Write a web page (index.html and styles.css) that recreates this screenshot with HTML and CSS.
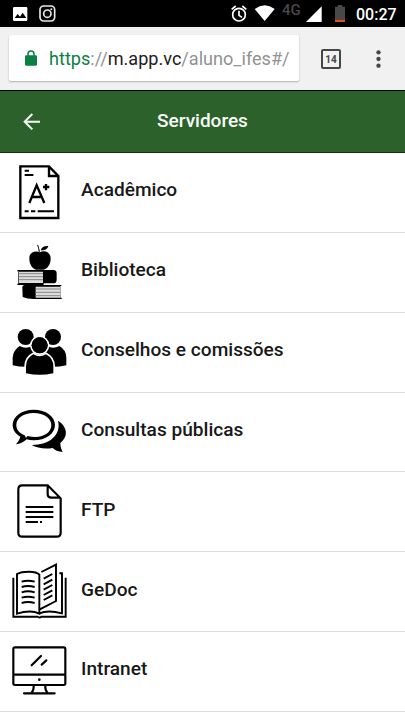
FILE: index.html
```
<!DOCTYPE html>
<html lang="pt-BR">
<head>
<meta charset="utf-8">
<meta name="viewport" content="width=device-width, initial-scale=1">
<title>Servidores</title>
<link rel="stylesheet" href="styles.css">
</head>
<body>
<div class="status">
  <svg class="status-left" viewBox="0 0 180 81">
    <rect x="39" y="21" width="43" height="42" rx="4" fill="#fff"/>
    <path d="M44 54l9-12 7 8 8-12 11 16z" fill="#000"/>
    <g fill="none" stroke="#e8e8e8" stroke-width="5"><rect x="120" y="18" width="44" height="45" rx="11"/><circle cx="142" cy="41" r="11"/></g>
    <circle cx="154" cy="28" r="3" fill="#e8e8e8"/>
  </svg>
  <div class="status-right">
    <svg class="signal" viewBox="72 0 144 81">
      <g fill="none" stroke="#fff" stroke-width="5"><circle cx="102" cy="44" r="19"/><path d="M102 32v14l9 6M80 28l12-10M112 18l12 10"/></g>
      <path d="M149 27q30-22 60 0l-30 36z" fill="#fff"/>
    </svg>
    <span class="network">4G</span>
    <svg class="battery" viewBox="300 0 135 81">
      <path d="M353 19v47h-47z" fill="#fff"/>
      <path d="M393 20h8v-5h14v5h8v39h-30z" fill="#484848"/><path d="M393 59h30v7h-30z" fill="#d9502f"/>
    </svg>
    <span class="clock">00:27</span>
  </div>
</div>
<div class="browser">
  <div class="address">
    <svg class="lock" viewBox="0 0 36 48"><path d="M9 18v-6a9 9 0 0 1 18 0v6" fill="none" stroke="#0b8043" stroke-width="4.5"/><rect y="16" width="36" height="31" rx="4" fill="#0b8043"/></svg>
    <span class="url"><span class="secure">https</span>://<span class="host">m.app.vc</span>/aluno_ifes#/</span>
  </div>
  <span class="tabs">14</span>
  <svg class="more" viewBox="0 0 14 54" fill="#464646"><circle cx="7" cy="7" r="6.5"/><circle cx="7" cy="27" r="6.5"/><circle cx="7" cy="47" r="6.5"/></svg>
</div>
<header class="header">
  <svg class="back" viewBox="0 0 51 51" fill="none" stroke="#f4fff4" stroke-width="6"><path d="M51 26H5M28 3L5 26l23 23"/></svg>
  <h1 class="title">Servidores</h1>
</header>
<main class="list">
  <a class="row">
    <svg class="icon" viewBox="0 0 204 225">
      <g fill="none" stroke="#000" stroke-width="7"><path d="M61 34h86l28 29v126H61zM147 34v29h28"/><path d="M88 144l22-53 23 53M96 126h28M129 96h19M138 87v19"/><path d="M74 47h13M74 60h26M74 169h12M93 169h13M113 169h49" stroke-width="6"/></g>
    </svg><span class="label">Acadêmico</span></a>
  <a class="row">
    <svg class="icon" viewBox="0 0 204 225">
      <path d="M119 52c-13-7-32-1-31 19 0 18 11 32 22 33h20c12-2 22-17 22-33 0-20-18-27-33-19z"/>
      <path d="M122 46c3-10 11-14 23-13-3 10-10 14-23 13z"/><path d="M111 30l4 1 5 19h-4q0-12-5-20z"/>
      <path d="M52 105h108q10 0 10 10v19q0 11-10 11h-29v5H52v-4h3v-37h-3zM184 150v3h-3v35h4v4h-84q-20 0-33-6l-1-27q-1-9 8-9z"/>
      <path d="M57 110h72v34H57zM107 155h73v33h-73z" fill="#ddd"/>
      <path d="M57 116h72M57 125h72M57 134h72M107 162h73M107 172h73M107 182h73" stroke="#858585" stroke-width="3"/>
    </svg><span class="label">Biblioteca</span></a>
  <a class="row">
    <svg class="icon" viewBox="0 0 204 225">
      <g id="member"><circle cx="77" cy="66" r="24"/><path d="M38 151v-23q1-22 21-35 18 10 37 0 21 12 21 35v23q-40 9-79 0z"/></g>
      <use href="#member" x="82"/>
      <g stroke="#fff" stroke-width="10" paint-order="stroke"><circle cx="119" cy="91" r="24"/><path d="M78 175v-21q0-25 22-36 18 12 38 0 22 12 22 36v21q-41 9-82 0z"/></g>
      <circle cx="119" cy="91" r="24"/>
    </svg><span class="label">Conselhos e comissões</span></a>
  <a class="row">
    <svg class="icon" viewBox="0 0 204 225">
      <path d="M174 80c27 17 33 46 7 67 0 12 3 18 7 27-14-1-23-5-30-12-25 4-47 0-63-9 54 1 90-31 79-73z"/>
      <path fill-rule="evenodd" d="M101 47c37 0 64 20 64 46s-28 46-64 46c-8 0-15-1-21-3-10 9-20 14-32 15 6-7 11-15 13-23-15-9-23-21-23-35 0-26 27-46 63-46zm0 10c-31 0-52 16-52 36 0 16 10 24 25 31l4 7 5-5c43 10 71-9 71-33 0-20-22-36-53-36z"/>
    </svg><span class="label">Consultas públicas</span></a>
  <a class="row">
    <svg class="icon" viewBox="0 0 204 225" fill="none" stroke="#000" stroke-width="6.5">
      <path d="M67 34h76l39 39v103q0 12-12 12H67q-12 0-12-12V46q0-12 12-12zM143 34v27q0 10 11 10h27"/><path d="M77 99h83M77 114h83M77 129h83M77 144h37M120 144h6"/>
    </svg><span class="label">FTP</span></a>
  <a class="row">
    <svg class="icon" viewBox="0 0 204 225" fill="none" stroke="#000" stroke-width="5.8">
      <path d="M118 167V62q-7-9-32-9-23 0-35 7v119q42-13 67 0V167l50-26V32l-44 22M178 58h8v120q-42-11-68 0M40 71v117h73q5 5 11 0h73V71"/>
      <path d="M65 83q19-6 39 0M65 99q19-6 39 0M65 115q19-6 39 0M65 131q19-6 39 0M65 147q19-6 39 0M131 74l26-14M131 91l26-14M131 107l26-14M131 123l26-14M131 138l26-14"/>
    </svg><span class="label">GeDoc</span></a>
  <a class="row">
    <svg class="icon" viewBox="0 0 204 225" fill="none" stroke="#000" stroke-width="6.5">
      <rect x="40" y="40" width="156" height="113" rx="5"/><path d="M40 122h156M101 153q1 16-7 24M136 153q-1 16 7 24"/><path d="M72 178h92M95 94l28-28M125 92l14-13" stroke-linecap="round"/><circle cx="118" cy="137" r="4" fill="#000" stroke="none"/>
    </svg><span class="label">Intranet</span></a>
</main>
</body>
</html>
```
FILE: styles.css
```
* { box-sizing: border-box; }
body { margin: 0; height: 720px; overflow: hidden; background: #fff; font-family: Roboto, sans-serif; color: #181818; }
.status { height: 27px; display: flex; justify-content: space-between; background: #000; color: #fff; }
.status-left { width: 60px; height: 27px; }
.status-right { display: flex; align-items: center; padding-right: 8px; }
.signal { width: 48px; height: 27px; margin-right: 5px; }
.network { width: 22px; padding-bottom: 7px; font-size: 15px; line-height: 16px; font-weight: 500; color: #484848; }
.battery { width: 45px; height: 27px; }
.clock { width: 41px; margin-left: 7px; padding-top: 2px; font-size: 16px; line-height: 24px; font-weight: 500; white-space: nowrap; }
.browser { height: 63px; display: flex; align-items: center; padding: 0 20px 0 9px; background: #f1f1f2; }
.address { width: 290px; height: 46px; margin-bottom: 1px; display: flex; align-items: center; padding-left: 16px; border-radius: 2px; background: #fff; box-shadow: 0 1px 2px rgba(0, 0, 0, .28); }
.lock { width: 12px; height: 16px; margin-right: 12px; flex: none; }
.url { padding-top: 2px; font-size: 18.1px; line-height: 24px; color: #929292; white-space: nowrap; }
.secure { color: #0b8043; }
.host { color: #202020; }
.tabs { width: 20px; height: 20px; margin-left: 22px; border: 2px solid #464646; border-radius: 2px; color: #464646; font-size: 10px; line-height: 17px; font-weight: 700; text-align: center; }
.more { width: 5px; height: 18px; margin-left: auto; margin-right: 4px; }
.header { height: 63px; display: grid; grid-template-columns: 60px 1fr 60px; align-items: center; border-top: 1px solid #000; border-bottom: 1px solid #102d10; background: #2c612b; }
.back { width: 17px; height: 17px; margin-left: 23px; margin-bottom: 1px; }
.title { margin: 0; padding-bottom: 2px; font-size: 19px; line-height: 24px; font-weight: 500; text-align: center; color: #f8fff8; }
.list { display: flex; flex-direction: column; }
.row { height: 79.85px; flex: none; display: flex; align-items: center; border-bottom: 1px solid #dcdcdc; }
.icon { width: 68px; height: 75px; margin-right: 13px; flex: none; }
.label { padding-bottom: 4px; font-size: 19.1px; line-height: 24px; font-weight: 500; white-space: nowrap; }
```
